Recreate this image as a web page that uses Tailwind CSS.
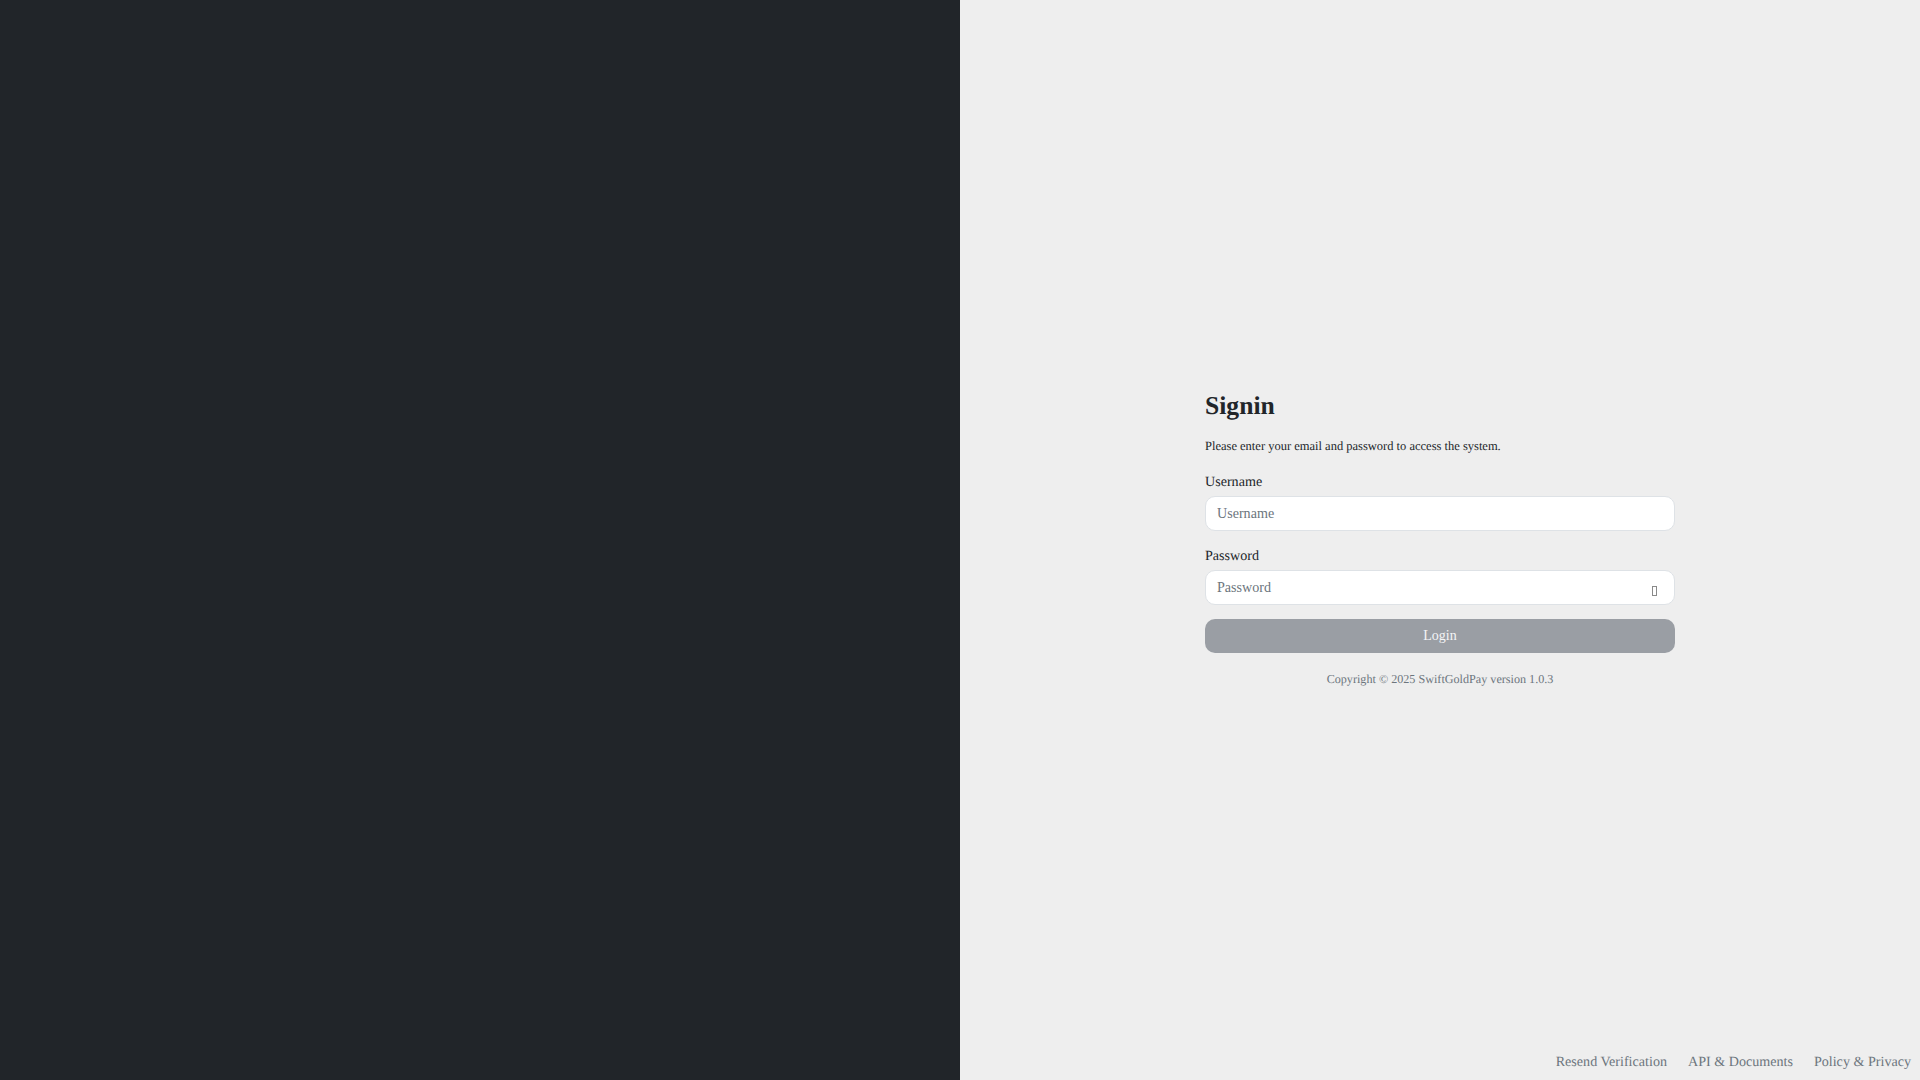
<!DOCTYPE html>
<html lang="en">
  <head>
    <meta charset="UTF-8" />
    <meta name="viewport" content="width=device-width, initial-scale=1.0" />
    <title>Signin</title>
    <script src="https://cdn.jsdelivr.net/npm/@tailwindcss/browser@4"></script>
  </head>
  <body class="h-screen overflow-hidden grid grid-cols-2 font-['Liberation_Serif',serif] [text-rendering:geometricPrecision] text-[#212529]">
    <!-- Left panel -->
    <aside class="bg-[#212529]"></aside>
    <!-- Right panel -->
    <main class="bg-[#eeeeee] grid grid-rows-[38px_1fr_38px]">
      <div></div>
      <div class="flex items-center justify-center">
        <form class="w-[470px] flex flex-col">
          <h1 class="text-[25.6px] leading-[31px] font-bold mb-[16px]">Signin</h1>
          <p class="text-[12.5px] leading-[18px] mb-[16px]">Please enter your email and password to access the system.</p>
          <div class="mb-[14px]">
            <label for="username" class="block text-[14.1px] leading-[21px] pt-px mb-[3px]">Username</label>
            <input
              type="text"
              id="username"
              placeholder="Username"
              class="w-full h-[35px] px-[11px] text-[14.1px] bg-white border border-[#dee2e6] rounded-[10px] placeholder:text-[#6c757d]"
            />
          </div>
          <div class="mb-[14px]">
            <label for="password" class="block text-[14.1px] leading-[21px] pt-px mb-[3px]">Password</label>
            <div class="relative">
              <input
                type="password"
                id="password"
                placeholder="Password"
                class="w-full h-[35px] px-[11px] text-[14.1px] bg-white border border-[#dee2e6] rounded-[10px] placeholder:text-[#6c757d]"
              />
              <span class="absolute right-[18px] top-[16px] w-[5px] h-[10px] border border-[#8a8a8a]"></span>
            </div>
          </div>
          <button type="button" class="h-[34px] w-full pb-px rounded-[10px] bg-[#9a9ea4] text-[#f4f5f6] text-[14px]">Login</button>
          <p class="text-center text-[12.15px] leading-[18px] text-[#6c757d] mt-[17px] mb-[2px]">Copyright © 2025 SwiftGoldPay version 1.0.3</p>
        </form>
      </div>
      <footer class="flex justify-end items-center gap-[21px] pt-[4px] pr-[9px] text-[14.1px] text-[#6c757d]">
        <a href="#">Resend Verification</a>
        <a href="#">API &amp; Documents</a>
        <a href="#">Policy &amp; Privacy</a>
      </footer>
    </main>
  </body>
</html>
